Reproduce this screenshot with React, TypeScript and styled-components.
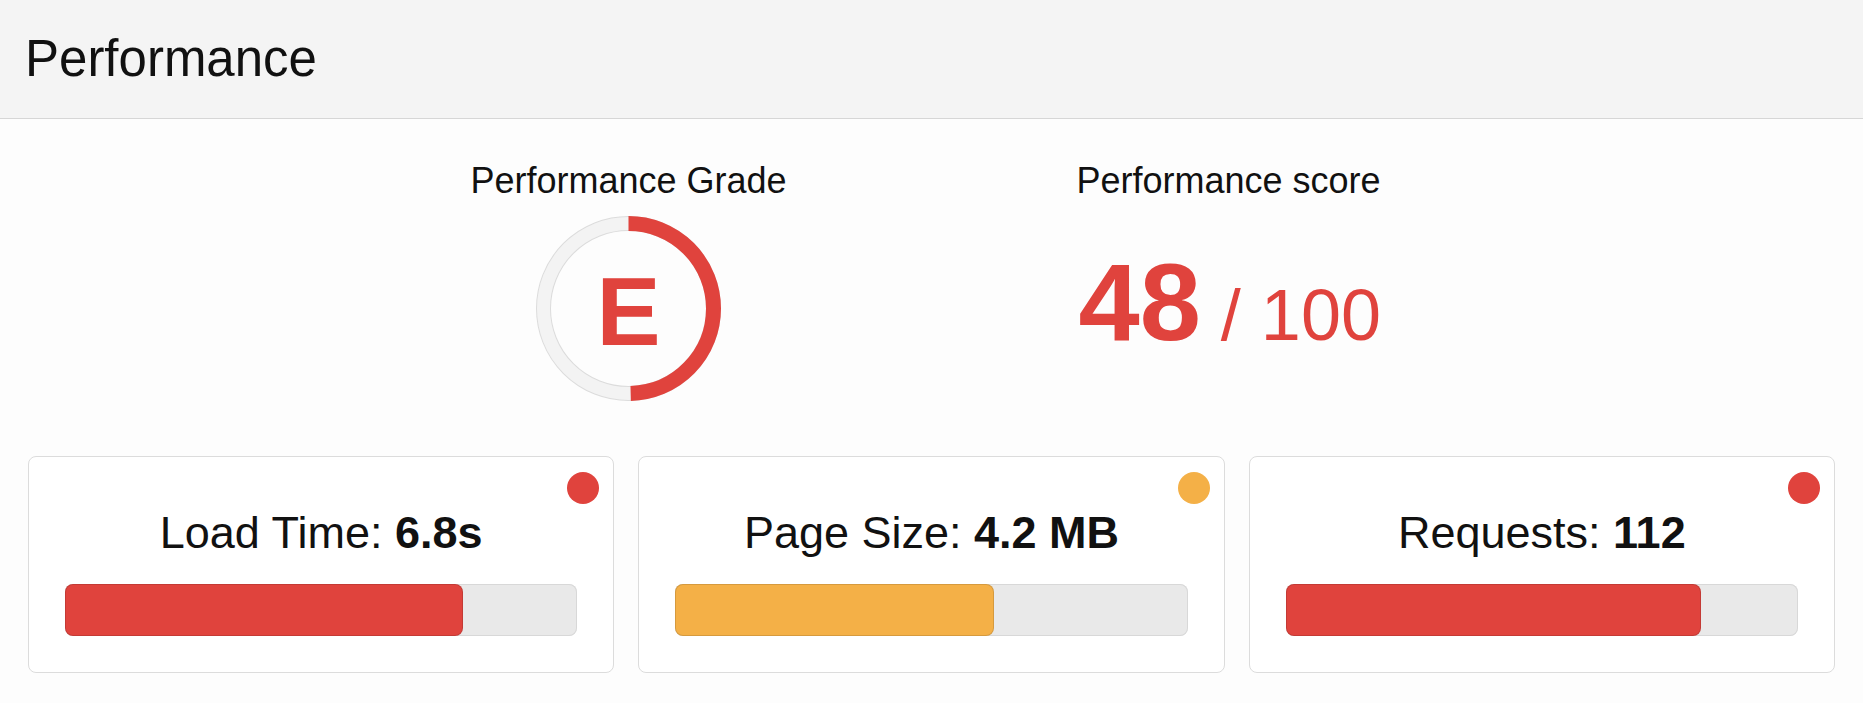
import React from "react";
import styled, { createGlobalStyle } from "styled-components";

const RED = "#e0433d";
const ORANGE = "#f4b047";

interface Metric {
  label: string;
  value: string;
  percent: number;
  color: string;
}

const metrics: Metric[] = [
  { label: "Load Time:", value: "6.8s", percent: 77.6, color: RED },
  { label: "Page Size:", value: "4.2 MB", percent: 62.2, color: ORANGE },
  { label: "Requests:", value: "112", percent: 81, color: RED },
];

const GRADE_SIZE = 185;
const GRADE_STROKE = 15;

function GradeRing({ grade, percent }: { grade: string; percent: number }) {
  const r = (GRADE_SIZE - GRADE_STROKE) / 2;
  const c = GRADE_SIZE / 2;
  const length = 2 * Math.PI * r;

  return (
    <Ring>
      <svg width={GRADE_SIZE} height={GRADE_SIZE} viewBox={`0 0 ${GRADE_SIZE} ${GRADE_SIZE}`}>
        <circle cx={c} cy={c} r={r} fill="none" stroke="#dcdcdc" strokeWidth={GRADE_STROKE} />
        <circle cx={c} cy={c} r={r} fill="none" stroke="#f3f3f3" strokeWidth={GRADE_STROKE - 2} />
        <circle
          cx={c}
          cy={c}
          r={r}
          fill="none"
          stroke={RED}
          strokeWidth={GRADE_STROKE}
          strokeDasharray={`${(length * percent) / 100} ${length}`}
          transform={`rotate(-90 ${c} ${c})`}
        />
      </svg>
      <GradeLetter>{grade}</GradeLetter>
    </Ring>
  );
}

export default function App() {
  return (
    <>
      <GlobalStyle />
      <Header>
        <Title>Performance</Title>
      </Header>
      <Summary>
        <GradeColumn>
          <Label>Performance Grade</Label>
          <GradeRing grade="E" percent={49.5} />
        </GradeColumn>
        <ScoreColumn>
          <Label>Performance score</Label>
          <Score>
            48<OutOf> / 100</OutOf>
          </Score>
        </ScoreColumn>
      </Summary>
      <Cards>
        {metrics.map((m) => (
          <Card key={m.label}>
            <Dot $color={m.color} />
            <MetricText>
              {m.label} <strong>{m.value}</strong>
            </MetricText>
            <Track>
              <Fill $color={m.color} style={{ width: `${m.percent}%` }} />
            </Track>
          </Card>
        ))}
      </Cards>
    </>
  );
}

const GlobalStyle = createGlobalStyle`
  * {
    box-sizing: border-box;
  }

  body {
    margin: 0;
    background: #fdfdfd;
    color: #111;
    font-family: "Liberation Sans", Arial, sans-serif;
  }
`;

const Header = styled.header`
  display: flex;
  align-items: center;
  height: 119px;
  padding-left: 25px;
  background: #f4f4f4;
  border-bottom: 1px solid #d6d6d6;
`;

const Title = styled.h1`
  margin: 0;
  font-size: 51px;
  font-weight: 400;
  line-height: 1.2;
  color: #111;
`;

const Summary = styled.section`
  display: grid;
  grid-template-columns: 320px 320px;
  justify-content: center;
  column-gap: 286px;
  padding-top: 40px;
`;

const GradeColumn = styled.div`
  display: flex;
  flex-direction: column;
  align-items: center;
`;

const ScoreColumn = styled.div`
  display: flex;
  flex-direction: column;
  align-items: flex-start;
  padding-left: 2px;
`;

const Label = styled.div`
  font-size: 36px;
  line-height: 1.2;
  color: #111;
  white-space: nowrap;
`;

const Ring = styled.div`
  position: relative;
  width: ${GRADE_SIZE}px;
  height: ${GRADE_SIZE}px;
  margin-top: 14px;

  svg {
    display: block;
  }
`;

const GradeLetter = styled.span`
  position: absolute;
  inset: 0;
  display: flex;
  align-items: center;
  justify-content: center;
  padding-top: 6px;
  font-size: 96px;
  font-weight: 700;
  line-height: 1;
  color: ${RED};
`;

const Score = styled.div`
  margin-top: 45px;
  padding-left: 2px;
  font-size: 110px;
  font-weight: 700;
  line-height: 1;
  color: ${RED};
  white-space: nowrap;
`;

const OutOf = styled.span`
  font-size: 72px;
  font-weight: 400;
`;

const Cards = styled.section`
  display: grid;
  grid-template-columns: repeat(3, 1fr);
  gap: 24px;
  margin-top: 55px;
  padding: 0 28px;
`;

const Card = styled.div`
  position: relative;
  display: flex;
  flex-direction: column;
  gap: 24px;
  padding: 49px 36px 36px;
  background: #fff;
  border: 1px solid #dcdcdc;
  border-radius: 8px;
`;

const Dot = styled.span<{ $color: string }>`
  position: absolute;
  top: 15px;
  right: 14px;
  width: 32px;
  height: 32px;
  border-radius: 50%;
  background: ${({ $color }) => $color};
`;

const MetricText = styled.div`
  font-size: 45px;
  line-height: 1.2;
  text-align: center;
  color: #111;

  strong {
    font-weight: 700;
  }
`;

const Track = styled.div`
  height: 52px;
  background: #e9e9e9;
  border-radius: 8px;
  box-shadow: inset 0 0 0 1px #d8d8d8;
`;

const Fill = styled.div<{ $color: string }>`
  height: 100%;
  background: ${({ $color }) => $color};
  border: 1px solid rgba(0, 0, 0, 0.12);
  border-radius: 8px;
`;
